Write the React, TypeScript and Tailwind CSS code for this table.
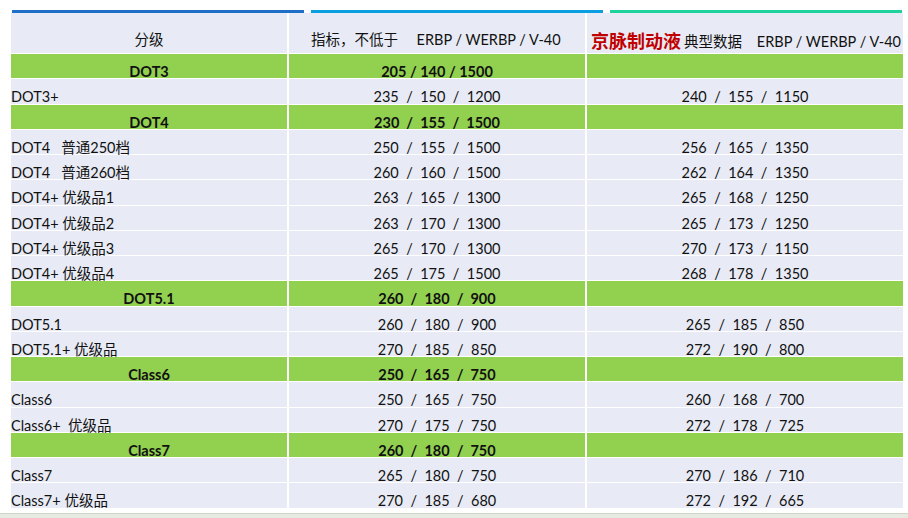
type Row = { grade: string; spec: string; typical: string; group?: boolean }

const rows: Row[] = [
  { grade: "DOT3", spec: "205 / 140 / 1500", typical: "", group: true },
  { grade: "DOT3+", spec: "235  /  150  /  1200", typical: "240  /  155  /  1150" },
  { grade: "DOT4", spec: "230  /  155  /  1500", typical: "", group: true },
  { grade: "DOT4   普通250档", spec: "250  /  155  /  1500", typical: "256  /  165  /  1350" },
  { grade: "DOT4   普通260档", spec: "260  /  160  /  1500", typical: "262  /  164  /  1350" },
  { grade: "DOT4+ 优级品1", spec: "263  /  165  /  1300", typical: "265  /  168  /  1250" },
  { grade: "DOT4+ 优级品2", spec: "263  /  170  /  1300", typical: "265  /  173  /  1250" },
  { grade: "DOT4+ 优级品3", spec: "265  /  170  /  1300", typical: "270  /  173  /  1150" },
  { grade: "DOT4+ 优级品4", spec: "265  /  175  /  1500", typical: "268  /  178  /  1350" },
  { grade: "DOT5.1", spec: "260  /  180  /  900", typical: "", group: true },
  { grade: "DOT5.1", spec: "260  /  180  /  900", typical: "265  /  185  /  850" },
  { grade: "DOT5.1+ 优级品", spec: "270  /  185  /  850", typical: "272  /  190  /  800" },
  { grade: "Class6", spec: "250  /  165  /  750", typical: "", group: true },
  { grade: "Class6", spec: "250  /  165  /  750", typical: "260  /  168  /  700" },
  { grade: "Class6+  优级品", spec: "270  /  175  /  750", typical: "272  /  178  /  725" },
  { grade: "Class7", spec: "260  /  180  /  750", typical: "", group: true },
  { grade: "Class7", spec: "265  /  180  /  750", typical: "270  /  186  /  710" },
  { grade: "Class7+ 优级品", spec: "270  /  185  /  680", typical: "272  /  192  /  665" },
]

const font = "font-['Lato','Noto_Sans_CJK_SC',sans-serif]"

export default function App() {
  return (
    <div className={`w-[908px] h-[518px] bg-white relative overflow-hidden ${font} text-[14.5px] text-[#111]`}>
      <div className="flex gap-[7px] pl-[12px] pt-[10px]">
        <div className="w-[292px] h-[3px] bg-[#1e6fc6]" />
        <div className="w-[292px] h-[3px] bg-[#0a9fe0]" />
        <div className="w-[292px] h-[3px] bg-[#1dd29c]" />
      </div>
      <div className="ml-[11px] grid grid-cols-[276px_296px_316px] gap-x-[2px] gap-y-px bg-white w-[890px]">
        <div className="h-[40px] bg-[#e8ebf5] flex items-end justify-center pb-[2px]">分级</div>
        <div className="h-[40px] bg-[#e8ebf5] flex items-end pl-[22px] pb-[2px] whitespace-pre">
          {"指标，不低于     ERBP / WERBP / V-40"}
        </div>
        <div className="h-[40px] bg-[#e8ebf5] flex items-end pl-[4px] pb-[3px] whitespace-pre">
          <span className="text-[#c00000] font-bold text-[18px] leading-none mr-[3px]">京脉制动液</span>
          <span className="leading-none pb-px">{"典型数据    ERBP / WERBP / V-40"}</span>
        </div>
        {rows.map((r, i) => {
          const bg = r.group ? "bg-[#92d050] font-bold" : "bg-[#e8ebf5]"
          const cell = `h-[24.25px] ${bg} flex items-start pt-[9px] leading-[17px] whitespace-pre`
          return [
            <div key={`${i}a`} className={`${cell} ${r.group ? "justify-center" : ""}`}>
              {r.grade}
            </div>,
            <div key={`${i}b`} className={`${cell} justify-center`}>
              {r.spec}
            </div>,
            <div key={`${i}c`} className={`${cell} justify-center`}>
              {r.typical}
            </div>,
          ]
        })}
      </div>
      <div className="absolute left-0 right-0 bottom-0 h-[5px] bg-[#e6eae0] border-t border-[#cfd5c8]" />
    </div>
  )
}
